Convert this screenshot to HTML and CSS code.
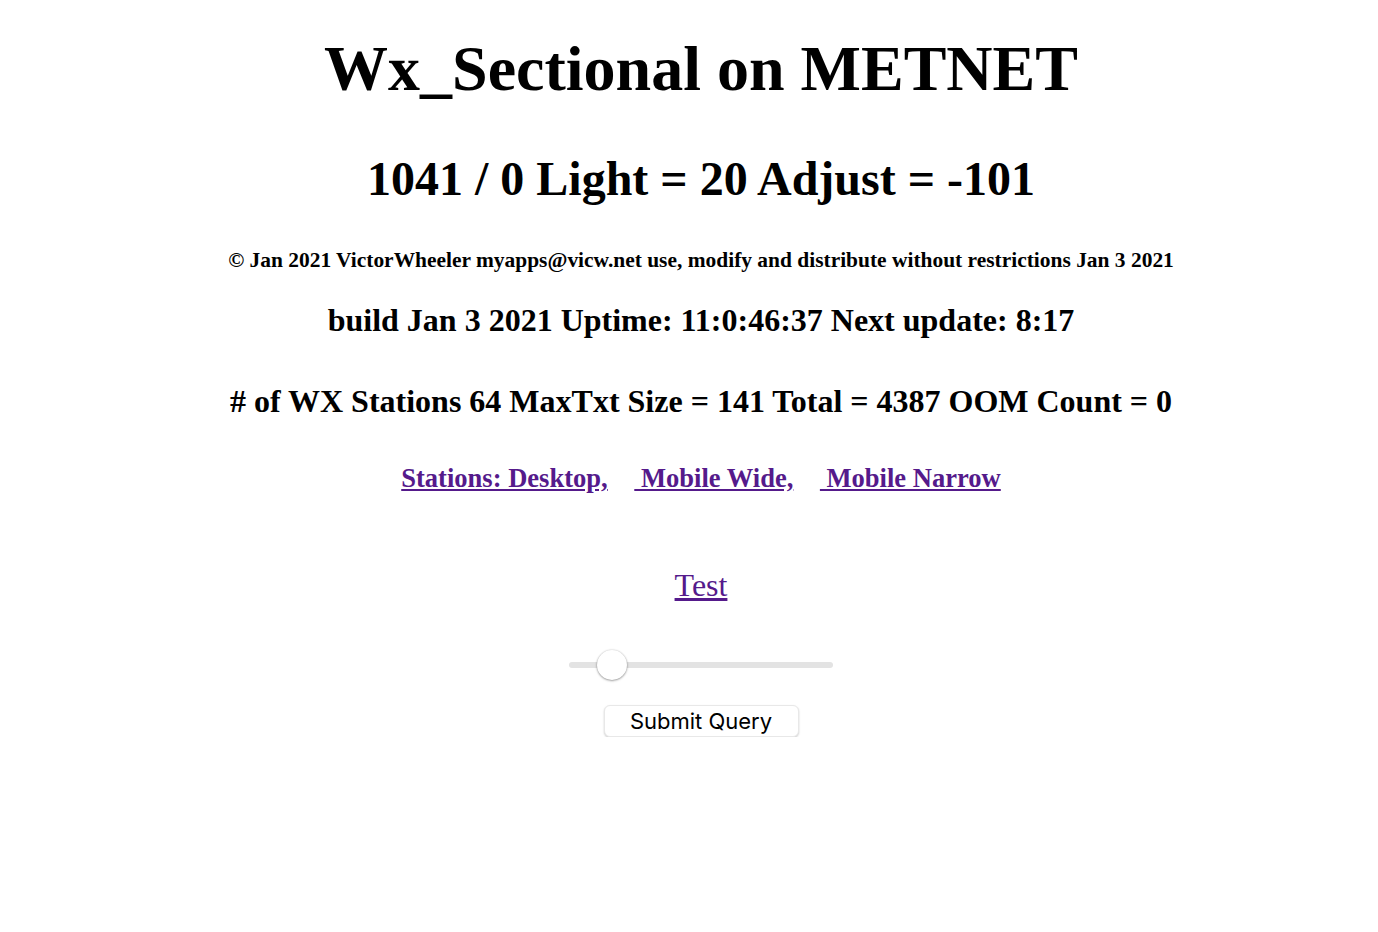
FILE: index.html
```html
<!DOCTYPE html>
<html>
<head>
<meta charset="utf-8">
<title>Wx_Sectional on METNET</title>
<link rel="stylesheet" href="styles.css">
</head>
<body>
<div class="page">
  <h1 class="title">Wx_Sectional on METNET</h1>
  <h2 class="status">1041 / 0 Light = 20 Adjust = -101</h2>
  <h6 class="copy">© Jan 2021 VictorWheeler myapps@vicw.net use, modify and distribute without restrictions Jan 3 2021</h6>
  <h4 class="build">build Jan 3 2021 Uptime: 11:0:46:37 Next update: 8:17</h4>
  <h4 class="stations">&#35; of WX Stations 64 MaxTxt Size = 141 Total = 4387 OOM Count = 0</h4>
  <h5 class="links"><a href="#">Stations: Desktop,</a>&nbsp;&nbsp;&nbsp;&nbsp;<a href="#">&nbsp;Mobile Wide,</a>&nbsp;&nbsp;&nbsp;&nbsp;<a href="#">&nbsp;Mobile Narrow</a></h5>
  <a class="test" href="#">Test</a>
  <form class="form">
    <input class="slider" type="range" min="0" max="100" value="12">
    <button class="submit" type="button">Submit Query</button>
  </form>
</div>
</body>
</html>
```
FILE: styles.css
```css
html, body {
  margin: 0;
  padding: 0;
  background: #fff;
}
.page {
  display: flex;
  flex-direction: column;
  align-items: center;
  padding-left: 24px;
  font-family: "Liberation Serif", "Times New Roman", serif;
  color: #000;
  text-align: center;
}
.page h1, .page h2, .page h4, .page h5, .page h6 {
  margin: 0;
  font-weight: bold;
  line-height: 1;
}
.title {
  font-size: 64px;
  margin-top: 37px !important;
}
.status {
  font-size: 48px;
  margin-top: 54px !important;
}
.copy {
  font-size: 21.44px;
  margin-top: 47px !important;
}
.build {
  font-size: 32px;
  margin-top: 33px !important;
}
.stations {
  font-size: 32px;
  margin-top: 49px !important;
}
.links {
  font-size: 26.56px;
  margin-top: 48px !important;
}
.links a, .test {
  color: #551a8b;
  text-decoration: underline;
}
.test {
  font-size: 32px;
  line-height: 1;
  margin-top: 77px;
}
.form {
  display: flex;
  flex-direction: column;
  align-items: center;
  margin: 0;
}
.slider {
  -webkit-appearance: none;
  appearance: none;
  width: 264px;
  height: 30px;
  margin: 49px 0 0 0;
  padding: 0;
  background: transparent;
}
.slider::-webkit-slider-runnable-track {
  height: 6px;
  border-radius: 3px;
  background: #e3e3e3;
}
.slider::-webkit-slider-thumb {
  -webkit-appearance: none;
  appearance: none;
  width: 30px;
  height: 30px;
  margin-top: -12px;
  border-radius: 50%;
  background: #fff;
  box-shadow: 0 0.5px 2px rgba(0,0,0,0.4), 0 1px 3px rgba(0,0,0,0.15);
}
.submit {
  margin-top: 25px;
  width: 195px;
  height: 32px;
  padding: 0;
  background: #fff;
  border: 1px solid #e8e8e8;
  border-radius: 6px;
  box-shadow: 0 1px 2px rgba(0,0,0,0.2);
  font-family: Inter, "Liberation Sans", Arial, sans-serif;
  font-size: 22px;
  color: #000;
}
```
